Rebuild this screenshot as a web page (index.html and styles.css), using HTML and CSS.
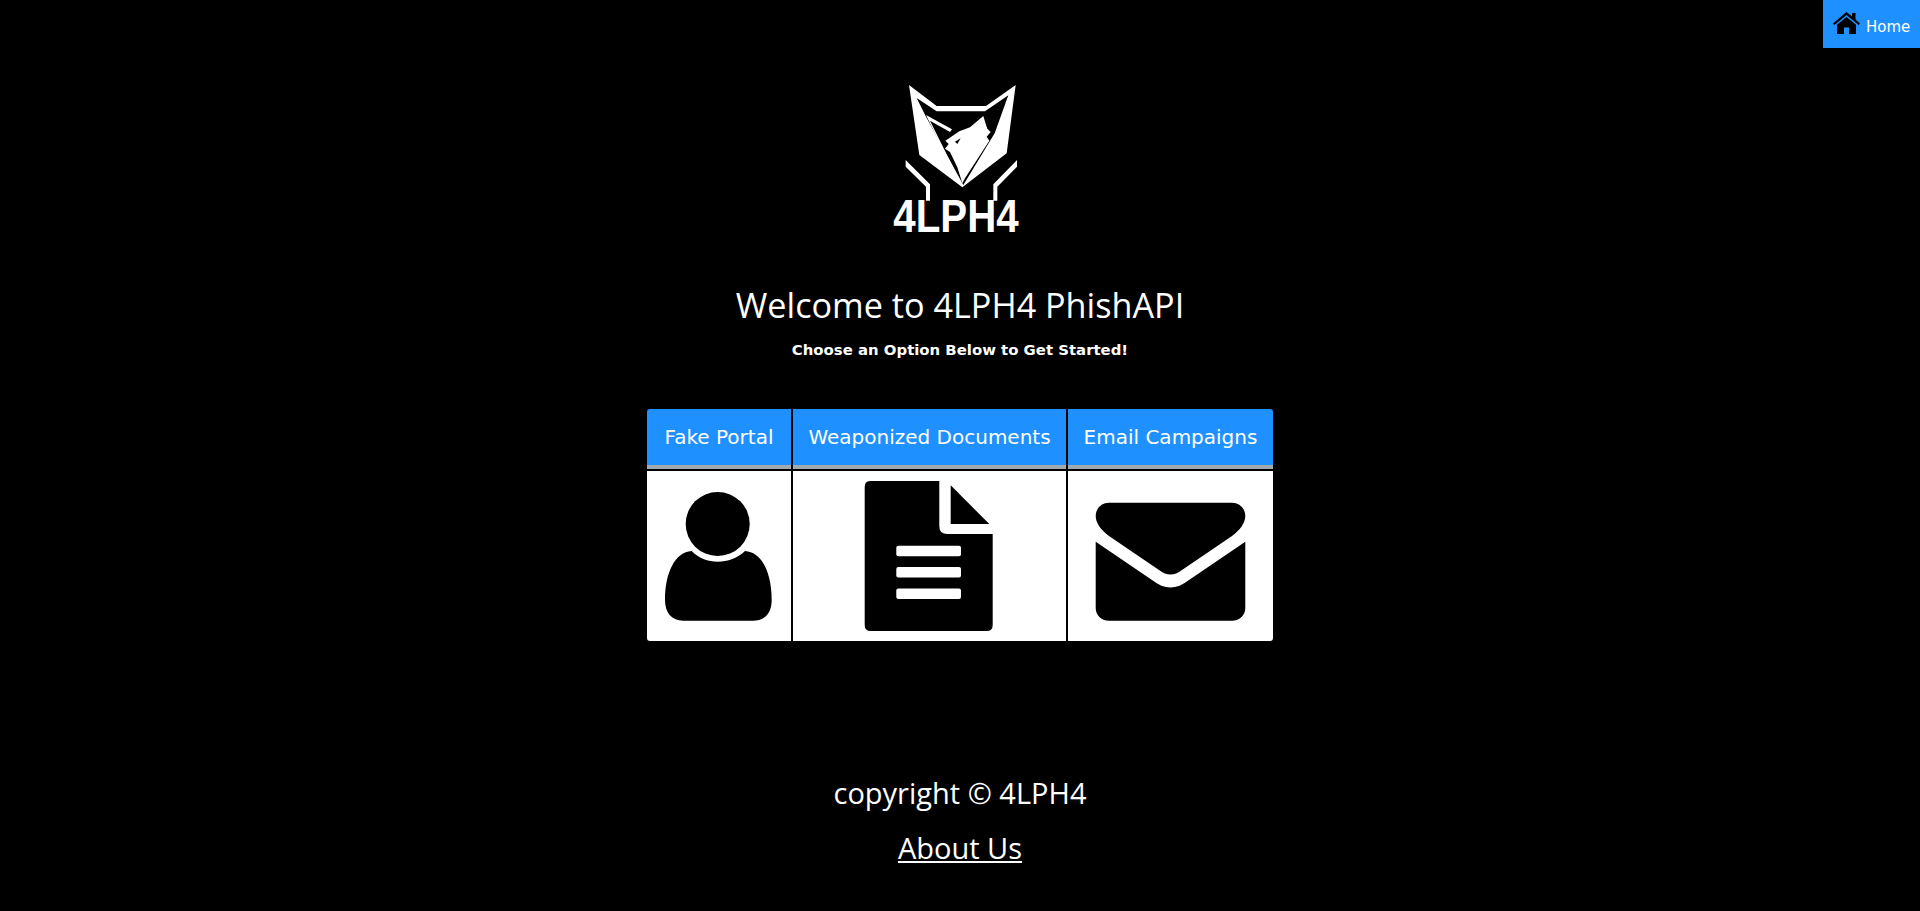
FILE: index.html
```html
<!DOCTYPE html>
<html lang="en">
<head>
  <meta charset="UTF-8">
  <meta name="viewport" content="width=device-width, initial-scale=1.0">
  <title>4LPH4 PhishAPI</title>
  <link rel="stylesheet" href="styles.css">
</head>
<body>
  <!-- Top bar -->
  <div class="topbar">
    <a class="home" href="#">
      <svg class="home-icon" viewBox="0 0 27 22">
        <path d="M13.5 0 L19 4.6 V1 H22.5 V7.6 L27 11.4 L25.6 13 L13.5 3 L1.4 13 L0 11.4 Z"/>
        <path d="M13.5 5 L23 12.8 V22 H16 V15.5 H11 V22 H4 V12.8 Z"/>
      </svg>
      Home
    </a>
  </div>

  <!-- Logo -->
  <svg class="logo" viewBox="0 0 540 525">
    <path class="w" d="M117 45 L200 108 H348 L437 45 L410 250 L277 352 L148 255 Z"/>
    <path class="k" d="M140 84 L200 124 H345 L415 76 L374 190 L280 345 L168 140 Z"/>
    <path class="w" d="M168 135 L246 178 L240 186 L180 152 L274 342 L270 344 Z"/>
    <path class="w" d="M340 138 L346 158 L352 176 L362 186 L350 200 L358 212 L285 325 L277 340 L262 292 L240 246 L225 236 L236 222 L226 212 L268 184 L300 172 Z"/>
    <path class="k" d="M255 215 L272 205 L262 222 Z"/>
    <path class="w" d="M107 270 L180 343 V392 H168 V350 L107 290 Z"/>
    <path class="w" d="M441 270 L370 343 V392 H382 V350 L441 290 Z"/>
    <text class="logo-text" x="70" y="486" textLength="376" lengthAdjust="spacingAndGlyphs">4LPH4</text>
  </svg>

  <h1>Welcome to 4LPH4 PhishAPI</h1>
  <p class="sub">Choose an Option Below to Get Started!</p>

  <!-- Options -->
  <div class="options">
    <a class="tab first" href="#">Fake Portal</a>
    <a class="tab" href="#">Weaponized Documents</a>
    <a class="tab last" href="#">Email Campaigns</a>

    <a class="cell cell-first" href="#">
      <svg viewBox="647 471 144 170">
        <circle cx="717.7" cy="524" r="32"/>
        <path d="M691.7 551 C698 558 708 561.700 717.700 561.700 C727.500 561.700 738 558 745 551 C762 552 771.700 573 771.700 600 C771.700 613 765 620.700 753 620.700 H683 C672 620.700 665 613 665 600 C665 573 675 552 691.700 551 Z"/>
      </svg>
    </a>
    <a class="cell" href="#">
      <svg viewBox="793 471 273 170">
        <path d="M870 481 H939.300 V526 Q939.300 534 947.300 534 H992.700 V625 Q992.700 631 986.700 631 H870.700 Q864.700 631 864.700 625 V487 Q864.700 481 870 481 Z"/>
        <path d="M950.700 485.300 L989.300 524 H950.700 Z"/>
        <rect class="line" x="896.300" y="545.700" width="64.700" height="10.500" rx="2"/>
        <rect class="line" x="896.300" y="567" width="64.700" height="10.500" rx="2"/>
        <rect class="line" x="896.300" y="588.500" width="64.700" height="10.500" rx="2"/>
      </svg>
    </a>
    <a class="cell cell-last" href="#">
      <svg viewBox="1068 471 205 170">
        <path d="M1109 502.700 H1232 C1240 502.700 1245.300 509 1245.300 516 C1245.300 523 1240 530 1232 536 L1182 570 C1174 576 1167 576 1159 570 L1109 536 C1101 530 1095.700 523 1095.700 516 C1095.700 509 1101 502.700 1109 502.700 Z"/>
        <path d="M1095.700 541.700 L1152 580 C1165 590 1176 590 1189 580 L1245.300 541.700 V608 C1245.300 615 1240 620.700 1232 620.700 H1109 C1101 620.700 1095.700 615 1095.700 608 Z"/>
      </svg>
    </a>
  </div>

  <!-- Footer -->
  <footer>
    <p>copyright &copy; 4LPH4</p>
    <a href="#">About Us</a>
  </footer>
</body>
</html>
```

FILE: styles.css
```css
body {
  font-family: "Open Sans", sans-serif;
  background-color: #000;
  margin: 0;
  color: #fff;
  text-align: center;
}
a {
  color: #fff;
}
.topbar {
  display: flex;
  justify-content: flex-end;
}
.home {
  display: flex;
  align-items: flex-end;
  box-sizing: border-box;
  width: 97px;
  height: 48px;
  padding: 0 0 12px 10px;
  gap: 6px;
  background-color: #1e90ff;
  font-family: "DejaVu Sans", sans-serif;
  font-size: 15px;
  text-decoration: none;
}
.home-icon {
  width: 27px;
  height: 22px;
  margin-bottom: 2px;
}
.logo {
  display: block;
  width: 180px;
  height: 175px;
  margin: 22px auto 0;
}
.logo .w {
  fill: #fff;
}
.logo .k {
  fill: #000;
}
.logo-text {
  font-family: "Liberation Sans", sans-serif;
  font-weight: bold;
  font-size: 140px;
  fill: #fff;
}
h1 {
  font-size: 34.2px;
  font-weight: normal;
  line-height: 44px;
  margin: 38px 0 0;
}
.sub {
  font-family: "DejaVu Sans", sans-serif;
  font-size: 14.9px;
  font-weight: bold;
  line-height: 18px;
  margin: 14px 0 0;
}
.options {
  display: grid;
  grid-template-columns: 144px 273px 205px;
  grid-template-rows: 60px 170px;
  gap: 2px;
  width: 626px;
  margin: 50px auto 0;
}
.tab {
  box-sizing: border-box;
  display: flex;
  align-items: center;
  justify-content: center;
  background-color: #1e90ff;
  border-bottom: 4px solid #a0a8b0;
  font-family: "DejaVu Sans", sans-serif;
  font-size: 20px;
  text-decoration: none;
}
.first {
  border-top-left-radius: 3px;
}
.last {
  border-top-right-radius: 3px;
}
.cell {
  display: block;
  background-color: #fff;
}
.cell svg {
  display: block;
  width: 100%;
  height: 100%;
}
.cell-first {
  border-bottom-left-radius: 3px;
}
.cell-last {
  border-bottom-right-radius: 3px;
}
.line {
  fill: #fff;
}
footer {
  margin-top: 130px;
  font-size: 29px;
}
footer p {
  margin: 0 0 13px;
  line-height: 44px;
}
footer a {
  line-height: 40px;
}
```
